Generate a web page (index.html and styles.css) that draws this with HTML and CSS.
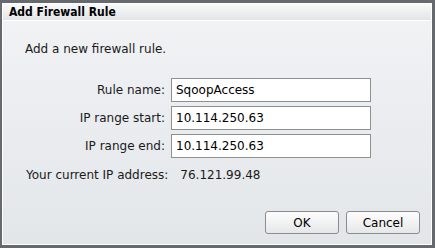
FILE: index.html
```html
<!DOCTYPE html>
<html lang="en">
<head>
    <meta charset="UTF-8">
    <title>Add Firewall Rule</title>
    <link rel="stylesheet" href="styles.css">
</head>
<body>
    <div class="dialog">
        <div class="title-bar">Add Firewall Rule</div>
        <div class="content">
            <p class="intro">Add a new firewall rule.</p>
            <form class="rule-form" onsubmit="return false">
                <label for="ruleName">Rule name:</label>
                <input type="text" id="ruleName" value="SqoopAccess">
                <label for="ipStart">IP range start:</label>
                <input type="text" id="ipStart" value="10.114.250.63">
                <label for="ipEnd">IP range end:</label>
                <input type="text" id="ipEnd" value="10.114.250.63">
            </form>
            <div class="current-ip">
                <span>Your current IP address:</span>
                <span class="ip-value">76.121.99.48</span>
            </div>
            <div class="buttons">
                <button type="button">OK</button>
                <button type="button">Cancel</button>
            </div>
        </div>
    </div>
</body>
</html>
```

FILE: styles.css
```css
* {
    margin: 0;
    padding: 0;
    box-sizing: border-box;
    font-family: "DejaVu Sans", Tahoma, sans-serif;
}

body {
    background: #666a6e;
    padding: 3px 3px 3px 2px;
    height: 248px;
}

.dialog {
    width: 430px;
    height: 242px;
    border: 1px solid #fff;
    background: linear-gradient(#f1f3f5, #e3e6e9);
    display: flex;
    flex-direction: column;
}

.title-bar {
    height: 17px;
    padding: 1px 0 0 6px;
    font-family: "DejaVu Sans Condensed", "DejaVu Sans", sans-serif;
    font-size: 12px;
    font-weight: bold;
    color: #000;
    background: linear-gradient(#f8f9f9, #e2e5e7);
    border-bottom: 1px solid #fff;
}

.content {
    flex: 1;
    display: flex;
    flex-direction: column;
    padding: 0 11px 10px 22px;
    font-size: 12px;
    color: #1a1a1a;
}

.intro {
    margin-top: 21px;
    margin-bottom: 22px;
}

.rule-form {
    display: grid;
    grid-template-columns: 140px 200px;
    column-gap: 6px;
    row-gap: 4px;
    align-items: center;
}

.rule-form label {
    text-align: right;
}

.rule-form input {
    height: 24px;
    border: 1px solid #8e8f8f;
    background: #fff;
    padding: 0 4px;
    font-size: 12px;
    color: #000;
}

.current-ip {
    margin-top: 10px;
    margin-left: 1px;
    display: flex;
    gap: 12px;
}

.buttons {
    margin-top: auto;
    display: flex;
    justify-content: flex-end;
    gap: 7px;
}

.buttons button {
    width: 74px;
    height: 23px;
    border: 1px solid #8a8c8e;
    border-radius: 3px;
    background: linear-gradient(#fdfdfd, #e6e7e8);
    font-size: 12px;
    color: #000;
}
```
